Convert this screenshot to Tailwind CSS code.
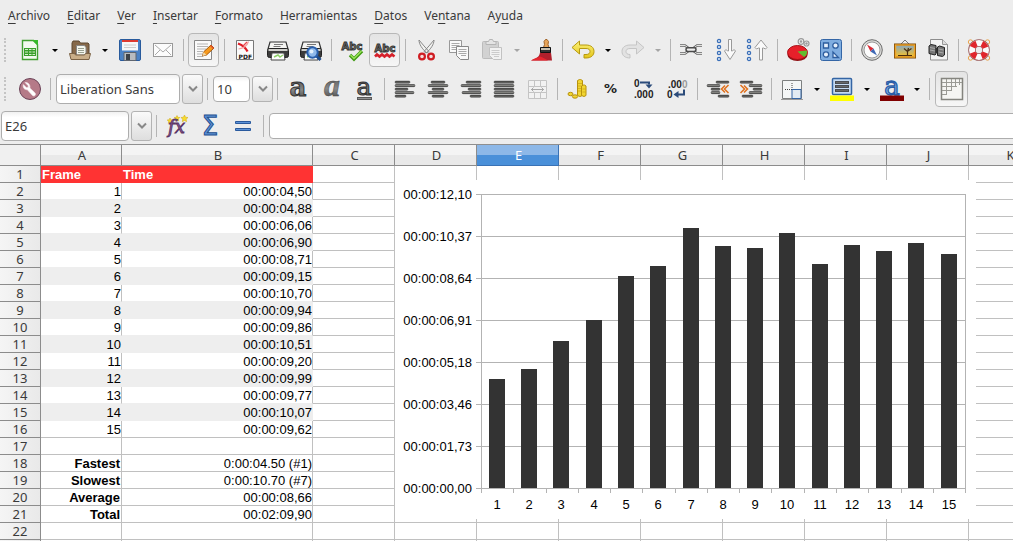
<!DOCTYPE html>
<html lang="es">
<head>
<meta charset="utf-8">
<meta name="viewport" content="width=device-width, initial-scale=1">
<title>Hoja de cálculo</title>
<script src="https://cdn.jsdelivr.net/npm/@tailwindcss/browser@4"></script>
</head>
<body class="flex h-screen flex-col overflow-hidden bg-[#ededed] font-['Noto_Sans',sans-serif] text-[13px] text-[#3a3a3a]">

<svg class="absolute size-0" aria-hidden="true">
  <defs>
    <linearGradient id="gBar" x1="0" y1="0" x2="0" y2="1"><stop offset="0" stop-color="#222"/><stop offset=".5" stop-color="#8a8a86"/><stop offset="1" stop-color="#222"/></linearGradient>
    <linearGradient id="gA" x1="0" y1="0" x2="0" y2="1"><stop offset="0" stop-color="#333"/><stop offset=".6" stop-color="#888"/><stop offset="1" stop-color="#333"/></linearGradient>
    <linearGradient id="gGold" x1="0" y1="0" x2="0" y2="1"><stop offset="0" stop-color="#fdf37a"/><stop offset="1" stop-color="#e3c41a"/></linearGradient>
    <linearGradient id="gSky" x1="0" y1="0" x2="0" y2="1"><stop offset="0" stop-color="#7fa6cc"/><stop offset="1" stop-color="#ffc21a"/></linearGradient>
    <symbol id="printer" viewBox="0 0 24 24">
      <path d="M4 4h16l2 7H2z" fill="#f4f4f2" stroke="#333" stroke-width="1.200"/>
      <path d="M8 6.500h9M7.500 8.500h7" stroke="#777"/>
      <rect x="1.500" y="10.500" width="21" height="9" rx="2" fill="#3b3b3b" stroke="#222"/>
      <path d="M2.500 12h19" stroke="#cfcfcb" stroke-width="2"/>
      <path d="M6 15h12l1 7H5z" fill="#fff" stroke="#444"/>
      <path d="M8 19l4-2 2 2 3-2" stroke="#8fd06a" stroke-width="1.500" fill="none"/>
    </symbol>
  </defs>
</svg>

<nav class="flex h-[31px] shrink-0 items-center gap-[17px] px-2 text-xs" aria-label="Menú principal">
  <button><u class="underline-offset-3">A</u>rchivo</button>
  <button><u class="underline-offset-3">E</u>ditar</button>
  <button><u class="underline-offset-3">V</u>er</button>
  <button><u class="underline-offset-3">I</u>nsertar</button>
  <button><u class="underline-offset-3">F</u>ormato</button>
  <button><u class="underline-offset-3">H</u>erramientas</button>
  <button><u class="underline-offset-3">D</u>atos</button>
  <button>Ve<u class="underline-offset-3">n</u>tana</button>
  <button>Ay<u class="underline-offset-3">u</u>da</button>
</nav>

<div class="flex h-[38px] shrink-0 items-center" role="toolbar" aria-label="Estándar" data-bar>
  <span class="w-[13px] shrink-0 pl-1"><span class="block h-6 w-0 border-l-2 border-dotted border-[#c4c4c4]"></span></span>
  <button aria-label="Nuevo"><svg viewBox="0 0 24 24"><path d="M4.500 2.500h11l4 4v15h-15z" fill="#f3faf0" stroke="#43a032" stroke-width="1.400"/><path d="M14 2h6v6z" fill="#36b82a"/><path d="M6 10h12v8H6z" fill="#3a9f2b"/><path d="M7 11.500h3M11 11.500h2.500M14.500 11.500h2.500M7 14h3M11 14h2.500M14.500 14h2.500M7 16.500h3M11 16.500h2.500M14.500 16.500h2.500" stroke="#d5f0cc" stroke-width="1.200"/></svg></button>
  <button data-arrow aria-label="Opciones de nuevo"></button>
  <button aria-label="Abrir"><svg viewBox="0 0 24 24"><path d="M4 16V5l1-2h6l1.500 2H20l1 1v10z" fill="#86694a" stroke="#5d4930"/><path d="M8.500 7.500h8l1.500 2V17h-9.500z" fill="#f5f7ee" stroke="#888"/><path d="M10 10.500h6M10 12.500h6M10 14.500h6" stroke="#99a191"/><path d="M1.500 15.500h5l1 1.500h9l1-1.500h5L21 21.500H3z" fill="#c9ae88" stroke="#7b6244"/></svg></button>
  <button data-arrow aria-label="Opciones de abrir"></button>
  <button aria-label="Guardar"><svg viewBox="0 0 24 24"><rect x="1.500" y="1.500" width="21" height="21" rx="1.500" fill="#4b82c6" stroke="#285a9c"/><path d="M4 2h16v10.500H4z" fill="#f7f7f7"/><path d="M4 2h16v2H4z" fill="#de3a30"/><path d="M6 7h12M6 9.500h12" stroke="#ccc"/><path d="M6 14.500h12v8H6z" fill="#b9bcc0" stroke="#5f6670"/><path d="M8 16h4v6H8z" fill="#3c4148"/></svg></button>
  <button aria-label="Correo"><svg viewBox="0 0 24 24"><rect x="2.500" y="5.500" width="19" height="13" fill="#fcfcfc" stroke="#999"/><path d="M4 7l8 7 8-7M4 17l5-5M20 17l-5-5" fill="none" stroke="#aaa"/></svg></button>
  <i data-sep></i>
  <button data-on aria-pressed="true" aria-label="Editar archivo"><svg viewBox="0 0 24 24"><path d="M2.500 2.500h17v19h-17z" fill="#fafafa" stroke="#888"/><path d="M5 6h11M5 8.500h11M5 11h9M5 13.500h6M5 16h5M5 18.500h6" stroke="#b5b5b5"/><path d="M10.500 18l1-4L19 7l3 3-7.500 7z" fill="#f79a1d" stroke="#a45608"/><path d="M10.500 18l1-4 3 3z" fill="#f1d8a8"/><path d="M18 8l1-1 3 3-1 1z" fill="#e05030"/></svg></button>
  <i data-sep></i>
  <button aria-label="Exportar a PDF"><svg viewBox="0 0 24 24"><path d="M3.500 2.500h17v19h-17z" fill="#fbfbfb" stroke="#777"/><path d="M5 5.500c4 1.500 7.500 4 9.500 8" stroke="#e01b24" stroke-width="2.400" fill="none"/><path d="M5.500 11c5-.5 8.500-3 10-7.500" stroke="#f2a0a0" stroke-width="1.200" fill="none"/><path d="M10 8l4-4" stroke="#e8474e" stroke-width="1.200"/><text x="12.300" y="20.500" text-anchor="middle" font-family="DejaVu Sans" font-weight="700" font-size="6" fill="#111">PDF</text></svg></button>
  <button aria-label="Imprimir"><svg viewBox="0 0 24 24"><use href="#printer"/></svg></button>
  <button aria-label="Vista preliminar"><svg viewBox="0 0 24 24"><use href="#printer"/><path d="M17.500 18l4 4" stroke="#1b4a8c" stroke-width="3"/><circle cx="13.500" cy="14.500" r="5.200" fill="#8fb9ea" stroke="#2a60ad" stroke-width="2"/><circle cx="12.500" cy="13.500" r="2" fill="#e1effc"/></svg></button>
  <i data-sep></i>
  <button aria-label="Ortografía"><svg viewBox="0 0 24 24"><text x="12" y="12" text-anchor="middle" font-family="DejaVu Sans" font-weight="700" font-size="10" fill="#777" stroke="#333" stroke-width=".9">Abc</text><path d="M10 17l4 4 8-8" fill="none" stroke="#3f9a12" stroke-width="3.400"/><path d="M10.500 17l3.500 3.500 7.500-7.500" fill="none" stroke="#9be35a" stroke-width="1.500"/></svg></button>
  <button data-on aria-pressed="true" aria-label="Revisión automática"><svg viewBox="0 0 24 24"><text x="12" y="13.500" text-anchor="middle" font-family="DejaVu Sans" font-weight="700" font-size="10" fill="#777" stroke="#333" stroke-width=".9">Abc</text><path d="M2 18.500l2-2 2.500 2 2.500-2 2.500 2 2.500-2 2.500 2 2.500-2 2.500 2" fill="none" stroke="#d6202a" stroke-width="2.600"/></svg></button>
  <i data-sep></i>
  <button aria-label="Cortar"><svg viewBox="0 0 24 24"><path d="M5 2c0 4 3 9 8 13l2-1.500C12 10 8 6 5 2zM20 2c0 4-3 9-8 13l-2-1.500C13 10 17 6 20 2z" fill="#f2f2f0" stroke="#888"/><circle cx="8" cy="18.500" r="2.900" fill="#f4dede" stroke="#cf1c22" stroke-width="2.200"/><circle cx="17" cy="18.500" r="2.900" fill="#f4dede" stroke="#cf1c22" stroke-width="2.200"/></svg></button>
  <button aria-label="Copiar"><svg viewBox="0 0 24 24"><path d="M2.500 2.500h12v12h-12z" fill="#fafafa" stroke="#999"/><path d="M4.500 5.500h8M4.500 7.500h8M4.500 9.500h8M4.500 11.500h5" stroke="#aaa"/><path d="M9.500 8.500h12v13h-8l-4-4z" fill="#fafafa" stroke="#888"/><path d="M11.500 11.500h8M11.500 13.500h8M11.500 15.500h8M14 17.500h5" stroke="#aaa"/></svg></button>
  <button disabled aria-label="Pegar"><svg viewBox="0 0 24 24"><rect x="2.500" y="3.500" width="16" height="17" rx="1" fill="#d2d2d2" stroke="#bcbcbc"/><path d="M6 6.500v-3h2.500l1-2h3l1 2H16v3z" fill="#e4e4e4" stroke="#b5b5b5"/><path d="M9.500 9.500h12v12h-8l-4-4z" fill="#f2f2f2" stroke="#c2c2c2"/><path d="M11.500 12.500h8M11.500 14.500h8M11.500 16.500h8M14 18.500h5" stroke="#ccc"/></svg></button>
  <button data-arrow="off" disabled aria-label="Opciones de pegar"></button>
  <button aria-label="Pincel de formato"><svg viewBox="0 0 24 24"><path d="M13.500 9.500l1-3-.5-3 1.500-2h1.500l1.500 2-.5 3 1 3z" fill="#e7a458" stroke="#a0642a"/><path d="M1 22.500c6-3 8-3 9-8h11l1 8z" fill="#b0202c"/><path d="M1 22.500c5-3 8-3 9-4 3 1 5 2 8 4z" fill="#e5262f"/><path d="M10.500 9.500h10v5h-10z" fill="#333" stroke="#111"/><path d="M11 10h9v2h-9z" fill="#c7bfae"/></svg></button>
  <i data-sep></i>
  <button aria-label="Deshacer"><svg viewBox="0 0 24 24"><path d="M1 9.500L8.500 3v4H15c5 0 8 2.500 8 6.500s-3 6.500-8 6.500h-2v-3.500h2c2.500 0 4-1 4-3s-1.500-3-4-3H8.500V16z" fill="url(#gGold)" stroke="#b79a10"/></svg></button>
  <button data-arrow aria-label="Opciones de deshacer"></button>
  <button disabled aria-label="Restaurar"><svg viewBox="0 0 24 24"><path d="M23 9.500L15.500 3v4H9c-5 0-8 2.500-8 6.500S4 20 9 20v-3.500c-2.500 0-4-1-4-3s1.500-3 4-3h6.500V16z" fill="#e2e2e2" stroke="#c5c5c5"/></svg></button>
  <button data-arrow="off" disabled aria-label="Opciones de restaurar"></button>
  <i data-sep></i>
  <button aria-label="Hiperenlace"><svg viewBox="0 0 24 24"><g fill="none" stroke="#666" stroke-width="2.600"><path d="M1 7.500h5l4 3M1 15.500h5l4-3M23 7.500h-5l-4 3M23 15.500h-5l-4-3"/></g><g fill="none" stroke="#e2e2e0" stroke-width="1"><path d="M1 7.500h5l4 3M1 15.500h5l4-3M23 7.500h-5l-4 3M23 15.500h-5l-4-3"/></g><rect x="7" y="9.800" width="10" height="3.600" rx="1.800" fill="#ededed" stroke="#4b4b4b" stroke-width="1.500"/></svg></button>
  <button aria-label="Orden ascendente"><svg viewBox="0 0 24 24"><g fill="#e9f1fb" stroke="#3a6fb8" stroke-width="1.300"><circle cx="7" cy="3" r="1.600"/><circle cx="7" cy="9" r="1.600"/><circle cx="7" cy="15" r="1.600"/><circle cx="7" cy="21" r="1.600"/></g><path d="M16.500 1.500h3V13h1l1.500-1.500 1.500 1.500-5.500 8.500-5.500-8.500 1.500-1.500L15.500 13h1z" fill="#fafafa" stroke="#999"/></svg></button>
  <button aria-label="Orden descendente"><svg viewBox="0 0 24 24"><g fill="#e9f1fb" stroke="#3a6fb8" stroke-width="1.300"><circle cx="4" cy="3" r="1.600"/><circle cx="4" cy="9" r="1.600"/><circle cx="4" cy="15" r="1.600"/><circle cx="4" cy="21" r="1.600"/></g><path d="M14.500 22V10h-1l-2 1-1.500-1.500L16 2l6 7.500-1.500 1.500-2-1h-1v12z" fill="#fafafa" stroke="#999"/></svg></button>
  <i data-sep></i>
  <button aria-label="Gráfico"><svg viewBox="0 0 24 24"><ellipse cx="11.500" cy="17" rx="10" ry="6" fill="#8e0f13"/><ellipse cx="11.500" cy="14.500" rx="10" ry="7" fill="#e7202a" stroke="#a90f16"/><path d="M11.500 13.500l9.500-1c.5 3.500-1 5.500-3 6.500z" fill="#62bd2e"/><g fill="#f4f4f4" stroke="#9a9a9a" stroke-width="1.200"><circle cx="15" cy="3.500" r="2.800"/><circle cx="20.500" cy="5.500" r="2.500"/><circle cx="15" cy="3.500" r=".7"/><circle cx="20.500" cy="5.500" r=".7"/></g></svg></button>
  <button aria-label="Formas"><svg viewBox="0 0 24 24"><rect x="1.500" y="1.500" width="21" height="21" rx="2" fill="#7fade0" stroke="#3466a6"/><g fill="#e6f0fb" stroke="#2d5d9e" stroke-width="1.300"><path d="M4.500 5h5v5h-5z"/><circle cx="16.500" cy="7.500" r="2.700"/><circle cx="7" cy="16.500" r="2.700"/><path d="M14 14v5.500h5.500z"/></g></svg></button>
  <i data-sep></i>
  <button aria-label="Navegador"><svg viewBox="0 0 24 24"><circle cx="12" cy="12" r="10.300" fill="#d8d8d6" stroke="#6e6e6e"/><circle cx="12" cy="12" r="8" fill="#fcfcfc" stroke="#999"/><path d="M7 6.500l6.500 4-3 3z" fill="#d92b36"/><path d="M17 17.500l-6.500-4 3-3z" fill="#3f68b5"/></svg></button>
  <button aria-label="Galería"><svg viewBox="0 0 24 24"><path d="M8 6l4-4 4 4" fill="none" stroke="#777"/><rect x="2" y="6.500" width="20" height="13" fill="url(#gSky)" stroke="#7a4a08" stroke-width="2"/><rect x="2.500" y="7" width="19" height="12" fill="none" stroke="#f0a428" stroke-width="1.400"/><path d="M14.500 17.500v-4l-3.500-3M14.500 13.500l1-3.500M15 13l3.500-2.500M5 17.500h14" stroke="#4a2d10" stroke-width="1.200" fill="none"/></svg></button>
  <button aria-label="Buscar y reemplazar"><svg viewBox="0 0 24 24"><path d="M4.500 1.500h12l5 5v15.500h-17z" fill="#f3f3f3" stroke="#8d8d8d"/><path d="M16.500 1.500v5h5" fill="#ddd" stroke="#999"/><path d="M3 8l2-1.500 5 1V16l-1 1-6-1.500z" fill="#777" stroke="#222"/><path d="M11.500 9l2-1 5 1.500v7.500l-2 1.500-5-1z" fill="#777" stroke="#222"/><path d="M9.500 10h2v5h-2z" fill="#333"/><path d="M4 9.500l5 1M4 12l5 1M12.500 11l5 1M12.500 14l5 1" stroke="#aaa"/></svg></button>
  <i data-sep></i>
  <button aria-label="Ayuda"><svg viewBox="0 0 24 24"><g fill="none" stroke="#e9a44e"><circle cx="3.500" cy="4" r="2.200"/><circle cx="20.500" cy="4" r="2.200"/><circle cx="3.500" cy="20" r="2.200"/><circle cx="20.500" cy="20" r="2.200"/></g><circle cx="12" cy="12" r="7" fill="none" stroke="#9a5a5a" stroke-width="7.600"/><circle cx="12" cy="12" r="7" fill="none" stroke="#fafafa" stroke-width="6"/><circle cx="12" cy="12" r="7" fill="none" stroke="#e0262c" stroke-width="6" stroke-dasharray="5.500 5.500" stroke-dashoffset="-2.750"/></svg></button>
</div>

<div class="flex h-10 shrink-0 items-center" role="toolbar" aria-label="Formato" data-bar>
  <span class="w-[13px] shrink-0 pl-1"><span class="block h-6 w-0 border-l-2 border-dotted border-[#c4c4c4]"></span></span>
  <button aria-label="Estilos"><svg viewBox="0 0 24 24"><circle cx="12" cy="12" r="10.500" fill="#b57a88" stroke="#6c4358"/><path d="M7 5.500l3 3 .3 1.800-2 .2-3-3c-.8 3.200 1.200 5.500 4 5.200l5.200 5.800c1.800 1.400 4-.6 2.600-2.500L11.900 11c.6-3.300-1.800-6-4.900-5.500z" fill="#fff" stroke="#f3e3e7" stroke-width=".6"/></svg></button>
  <i data-sep></i>
  <input aria-label="Nombre de fuente" value="Liberation Sans" class="ml-0.5 h-[30px] w-[124px] shrink-0 rounded-[4px] border border-[#adadad] bg-white bg-linear-to-b from-[#f1f1f1] to-white to-20% px-[3px] outline-none">
  <button data-drop class="h-[30px]" aria-label="Lista de fuentes"></button>
  <i data-sep></i>
  <input aria-label="Tamaño de fuente" value="10" class="ml-0.5 h-[26px] w-[37px] shrink-0 rounded-[4px] border border-[#adadad] bg-white bg-linear-to-b from-[#f1f1f1] to-white to-20% px-[3px] outline-none">
  <button data-drop class="h-[26px]" aria-label="Lista de tamaños"></button>
  <i data-sep></i>
  <button aria-label="Negrita"><svg viewBox="0 0 24 24"><text x="12" y="19" text-anchor="middle" font-family="DejaVu Serif" font-weight="700" font-size="26" fill="url(#gA)" stroke="#333" stroke-width="1">a</text></svg></button>
  <button aria-label="Cursiva"><svg viewBox="0 0 24 24"><text x="13" y="19" text-anchor="middle" font-family="Liberation Serif" font-style="italic" font-weight="700" font-size="32" fill="url(#gA)" stroke="#444" stroke-width=".5">a</text></svg></button>
  <button aria-label="Subrayado"><svg viewBox="0 0 24 24"><text x="12" y="18" text-anchor="middle" font-family="DejaVu Serif" font-weight="400" font-size="25" fill="#777" stroke="#333" stroke-width="1">a</text><path d="M5 21.500h15" stroke="#333" stroke-width="2.600"/><path d="M5.500 21.500h14" stroke="#aaa" stroke-width=".8"/></svg></button>
  <i data-sep></i>
  <button aria-label="Izquierda"><svg viewBox="0 0 24 24" data-lines="2,17 2,22 2,15 2,21 2,13"></svg></button>
  <button aria-label="Centrar"><svg viewBox="0 0 24 24" data-lines="5,19 2,22 6,18 2,22 6,18"></svg></button>
  <button aria-label="Derecha"><svg viewBox="0 0 24 24" data-lines="7,22 2,22 9,22 3,22 11,22"></svg></button>
  <button aria-label="Justificado"><svg viewBox="0 0 24 24" data-lines="2,22 2,22 2,22 2,22 2,22"></svg></button>
  <button disabled aria-label="Combinar celdas"><svg viewBox="0 0 24 24"><path d="M3.500 3.500h18v18h-18zM3.500 9.500h18M3.500 15.500h18M9.500 3.500v6M15.500 3.500v6M9.500 15.500v6M15.500 15.500v6" fill="#f2f2f2" stroke="#c4c4c4"/><path d="M6 12.500h13M8.500 10.500l-2 2 2 2M16.500 10.500l2 2-2 2" fill="none" stroke="#a8a8a8"/></svg></button>
  <i data-sep></i>
  <button aria-label="Moneda"><svg viewBox="0 0 24 24"><g fill="#f1d531" stroke="#b8920c"><path d="M11.500 3.500l2-1h1l2 1v15l-2.500 1-2.500-1z"/><path d="M15.500 9l2-1h1l1.500 1v9.500l-2 1-2.500-1z"/><ellipse cx="4.500" cy="17" rx="2.500" ry="1.700"/><ellipse cx="9" cy="19.500" rx="2.700" ry="1.700"/></g><path d="M12 6.500h4M12 9h3M12 11.500h3M12 14h3M16.500 12h3M16.500 15h3" stroke="#c9a416" stroke-width=".7"/></svg></button>
  <button aria-label="Porcentaje" class="font-['DejaVu_Sans',sans-serif] text-[13px] font-bold text-[#222]">%</button>
  <button aria-label="Añadir decimal"><svg viewBox="0 0 24 24" font-family="Liberation Sans" font-weight="700" font-size="10" fill="#222"><text x="2" y="10">0</text><text x="2" y="21">.000</text><path d="M8 5.500h9v2" fill="none" stroke="#2b4b7a" stroke-width="2"/><path d="M13.500 7.500h7L17 11.500z" fill="#2b4b7a"/></svg></button>
  <button aria-label="Eliminar decimal"><svg viewBox="0 0 24 24" font-family="Liberation Sans" font-weight="700" font-size="10" fill="#222"><text x="3" y="11">.00<tspan fill="#999">0</tspan></text><text x="2" y="21">0</text><path d="M19 12.500v5h-6" fill="none" stroke="#2b4b7a" stroke-width="2"/><path d="M13.500 14v7L8.500 17.500z" fill="#2b4b7a"/></svg></button>
  <i data-sep></i>
  <button aria-label="Reducir sangría"><svg viewBox="0 0 24 24" data-lines="10,23 1,14 5,14 5,14 12,23"><path d="M22.500 8L18.500 12l4 4M19 8.500L15.500 12l3.500 3.500" fill="none" stroke="#e0701c" stroke-width="1.500"/></svg></button>
  <button aria-label="Aumentar sangría"><svg viewBox="0 0 24 24" data-lines="1,14 10,23 14,23 10,23 3,14"><path d="M1.500 8l4 4-4 4M5 8.500L8.500 12 5 15.500" fill="none" stroke="#e0701c" stroke-width="1.500"/></svg></button>
  <i data-sep></i>
  <button aria-label="Bordes"><svg viewBox="0 0 24 24"><path d="M2.500 3.500h19v18h-19z" fill="#f4f6f6" stroke="#7d8080"/><path d="M5 12.500h7M12 6v6" stroke="#444" stroke-dasharray="1 1"/><path d="M12 12.500h9v9h-9z" fill="#e3ebf2" stroke="#3465a4"/><path d="M1 22.500h22" stroke="#999"/></svg></button>
  <button data-arrow aria-label="Opciones de bordes"></button>
  <button aria-label="Color de fondo"><svg viewBox="0 0 24 24"><rect x="2.500" y="1.500" width="19" height="16" rx="1" fill="#c5dbf3" stroke="#3465a4" stroke-width="1.500"/><path d="M5 5.500h14M5 9.500h14M5 13.500h14" stroke="#222" stroke-width="2.400"/><path d="M5.500 5.500h13M5.500 9.500h13M5.500 13.500h13" stroke="#888" stroke-width=".7"/><path d="M0 18.500h24V24H0z" fill="#ff0"/></svg></button>
  <button data-arrow aria-label="Opciones de color de fondo"></button>
  <button aria-label="Color de fuente"><svg viewBox="0 0 24 24"><text x="12" y="17.500" text-anchor="middle" font-family="DejaVu Serif" font-size="26" fill="#86b1e4" stroke="#2a5ea8" stroke-width="1.300">a</text><path d="M0 18.500h24V24H0z" fill="#800000"/></svg></button>
  <button data-arrow aria-label="Opciones de color de fuente"></button>
  <i data-sep></i>
  <button aria-pressed="true" data-onbig aria-label="Líneas de cuadrícula"><svg viewBox="0 0 24 24"><path d="M1.500 1.500h21v21h-21z" fill="#f5f5f2" stroke="#84847e" stroke-width="1.500"/><path d="M2 5.500h20M2 9.500h15M2 13.500h10M2 17.500h5M6.500 2v16M11.500 2v12M15.500 2v8M19.500 2v6" stroke="#9a9a94"/></svg></button>
</div>

<div class="flex h-9 shrink-0 items-center border-b border-[#8f8f8f] pb-px pl-px" data-bar>
  <input aria-label="Cuadro de nombre" value="E26" class="h-[30px] w-32 shrink-0 rounded-[4px] border border-[#adadad] bg-white bg-linear-to-b from-[#f1f1f1] to-white to-20% px-[3px] outline-none">
  <button data-drop class="h-[30px]" aria-label="Lista de nombres"></button>
  <i data-sep></i>
  <button aria-label="Asistente de funciones"><svg viewBox="0 0 24 24"><g fill="#f8dc2c" stroke="#cda510" stroke-width=".5"><path d="M5 4l.8 1.800 2 .2-1.500 1.400.4 2L5 8.400l-1.700 1 .4-2L2.200 6l2-.2z"/><path d="M12 1.500l.8 1.800 2 .2-1.500 1.400.4 2-1.700-1-1.700 1 .4-2-1.500-1.400 2-.2z"/><path d="M19.500 1l1 2.200 2.500.3-1.900 1.700.5 2.500-2.100-1.200-2.200 1.200.5-2.500-1.900-1.700 2.500-.3z"/></g><text x="11.500" y="19" text-anchor="middle" font-family="DejaVu Serif" font-style="italic" font-size="18" fill="#8d5a99" stroke="#5c3566" stroke-width=".9">fx</text></svg></button>
  <button aria-label="Suma"><svg viewBox="0 0 24 24"><text x="12" y="21" text-anchor="middle" font-family="DejaVu Sans" font-size="26" fill="#5d93d8" stroke="#244f8e" stroke-width="1">Σ</text></svg></button>
  <button aria-label="Función"><svg viewBox="0 0 24 24"><path d="M4.500 7.500h15v2h-15zM4.500 14.500h15v2h-15z" fill="#5d93d8" stroke="#2a5a9e"/></svg></button>
  <i data-sep></i>
  <input aria-label="Línea de entrada" class="-mr-1 ml-0.5 h-[26px] min-w-0 flex-1 rounded-[4px] border border-[#adadad] bg-white px-1 outline-none">
</div>

<main class="relative min-h-0 flex-1 overflow-hidden bg-white">
  <table class="w-[1051px] table-fixed border-separate border-spacing-0 font-['Liberation_Sans',sans-serif] text-[13px] leading-[14px] text-black">
    <colgroup id="cols"></colgroup>
    <thead><tr id="head"></tr></thead>
    <tbody id="rows"></tbody>
  </table>
  <svg id="chart" role="img" aria-label="Tiempo por fotograma" class="absolute top-[35px] left-[395px] h-[339px] w-[581px] bg-white font-['Liberation_Sans',sans-serif] text-[13px]" viewBox="0 0 581 339"></svg>
</main>

<script>
  const each = (q, f) => document.querySelectorAll(q).forEach(f);
  const add = (el, names) => el.classList.add(...names.split(' '));

  each('[data-bar] > i', e => { add(e, 'flex w-2 shrink-0 justify-center'); e.innerHTML = '<span class="h-[22px] w-px bg-[#b4b4b4]"></span>'; });
  each('[data-bar] > button', b => {
    if ('arrow' in b.dataset) {
      add(b, 'flex w-[17px] shrink-0 justify-center');
      b.innerHTML = b.dataset.arrow === 'off'
        ? '<span class="border-x-3 border-t-3 border-x-transparent border-t-[#a5a5a5]"></span>'
        : '<span class="border-x-3 border-t-3 border-x-transparent border-t-black"></span>';
    } else if ('drop' in b.dataset) {
      add(b, 'ml-0.5 flex w-[21px] shrink-0 items-center justify-center rounded-[3px] border border-[#b3b3b3] bg-linear-to-b from-[#fafafa] to-[#dedede]');
      b.innerHTML = '<svg class="h-2 w-3" viewBox="0 0 12 8"><path d="M2 1.500l4 4 4-4" fill="none" stroke="#888" stroke-width="2"/></svg>';
    } else if ('on' in b.dataset) {
      add(b, 'mx-px flex h-[34px] w-[31px] shrink-0 items-center justify-center rounded-[4px] border border-[#b8b8b8] bg-linear-to-b from-[#e4e4e4] to-[#f6f6f6]');
    } else if ('onbig' in b.dataset) {
      add(b, 'ml-0.5 flex h-9 w-[33px] shrink-0 items-center justify-center rounded-[4px] border border-[#b8b8b8] bg-linear-to-b from-[#e4e4e4] to-[#f6f6f6]');
    } else add(b, 'flex w-[33px] shrink-0 items-center justify-center');
  });
  each('[data-bar] button > svg[viewBox="0 0 24 24"]', s => add(s, 'size-6 shrink-0 overflow-visible'));
  each('[data-lines]', s => {
    s.dataset.lines.split(' ').forEach((p, i) => {
      const [a, b] = p.split(',').map(Number), y = 4 + i * 3.5;
      s.insertAdjacentHTML('beforeend', `<rect x="${a}" y="${y}" width="${b - a}" height="2.200" rx="1" fill="url(#gBar)" stroke="#333" stroke-width=".4"/>`);
    });
  });

  const letters = 'ABCDEFGHIJK'.split('');
  document.getElementById('cols').innerHTML =
    '<col class="w-[41px]"><col class="w-[81px]"><col class="w-[191px]">' + '<col class="w-[82px]">'.repeat(9);
  document.getElementById('head').innerHTML =
    `<th class="h-[21px] border-r border-b border-[#8c8c8c] bg-[#f0f0f0] p-0"></th>` + letters.map(l => l === 'E'
      ? `<th scope="col" class="h-[21px] border-r border-b border-[#3a72b5] bg-linear-to-b from-[#8db8e8] from-50% to-[#4a90d9] to-50% p-0 pl-0.5 font-['Noto_Sans',sans-serif] font-normal text-white">${l}</th>`
      : `<th scope="col" class="h-[21px] border-r border-b border-[#8c8c8c] bg-linear-to-b from-[#f4f4f4] from-50% to-[#e9e9e9] to-50% p-0 pl-0.5 font-['Noto_Sans',sans-serif] font-normal text-[#3a3a3a]">${l}</th>`).join('');

  const times = ['04,50','04,88','06,06','06,90','08,71','09,15','10,70','09,94','09,86','10,51','09,20','09,99','09,77','10,07','09,62'];
  const totals = { 18: ['Fastest', '0:00:04.50 (#1)'], 19: ['Slowest', '0:00:10.70 (#7)'], 20: ['Average', '00:00:08,66'], 21: ['Total', '00:02:09,90'] };
  let html = '';
  for (let r = 1; r <= 23; r++) {
    html += `<tr><th scope="row" class="h-[17px] border-r border-b border-[#8c8c8c] bg-linear-to-r from-[#f5f5f5] to-[#e9e9e9] p-0 font-['Noto_Sans',sans-serif] leading-4 font-normal text-[#3a3a3a]">${r}</th>`;
    if (r === 1) html += '<th scope="col" class="border-r border-b border-[#ff3333] bg-[#ff3333] p-0 pt-0.5 pl-px text-left font-bold text-white">Frame</th><th scope="col" class="border-r border-b border-[#ff3333] bg-[#ff3333] p-0 pt-0.5 pl-px text-left font-bold text-white">Time</th>';
    else if (r <= 16) {
      const c = r % 2 ? 'border-r border-b border-[#eeeeee] bg-[#eeeeee] p-0 pt-0.5 text-right'
        : r === 16 ? 'border-r border-b border-[#c0c0c0] p-0 pt-0.5 text-right'
        : 'border-r border-b border-r-[#c0c0c0] border-b-[#eeeeee] p-0 pt-0.5 text-right';
      html += `<td class="${c}">${r - 1}</td><td class="${c}">00:00:${times[r - 2]}</td>`;
    } else {
      const [a, b] = totals[r] || ['', ''];
      html += `<td class="border-r border-b border-[#c0c0c0] p-0 pt-0.5 pr-px text-right font-bold">${a}</td><td class="border-r border-b border-[#c0c0c0] p-0 pt-0.5 text-right">${b}</td>`;
    }
    html += '<td class="border-r border-b border-[#c0c0c0] p-0"></td>'.repeat(9) + '</tr>';
  }
  document.getElementById('rows').innerHTML = html;

  const ticks = ['12,10','10,37','08,64','06,91','05,18','03,46','01,73','00,00'];
  let g = '';
  ticks.forEach((t, i) => {
    const y = 14.5 + i * 42;
    g += `<path d="M81 ${y}H571" stroke="#b3b3b3"/><text x="77" y="${y + 4.5}" text-anchor="end">00:00:${t}</text>`;
  });
  g += '<path d="M86.500 14V313M570.500 14V313" stroke="#b3b3b3"/>';
  times.forEach((t, i) => {
    const x = 86.5 + i * 32.27, h = Math.round(parseFloat(t.replace(',', '.')) / 12.1 * 294), left = Math.round(x + 7.4);
    g += `<path d="M${Math.floor(x) + .5} 308V313" stroke="#b3b3b3"/><rect x="${left}" y="${308 - h}" width="16" height="${h}" fill="#333"/><text x="${left + 8}" y="329" text-anchor="middle">${i + 1}</text>`;
  });
  document.getElementById('chart').innerHTML = g;
</script>
</body>
</html>
